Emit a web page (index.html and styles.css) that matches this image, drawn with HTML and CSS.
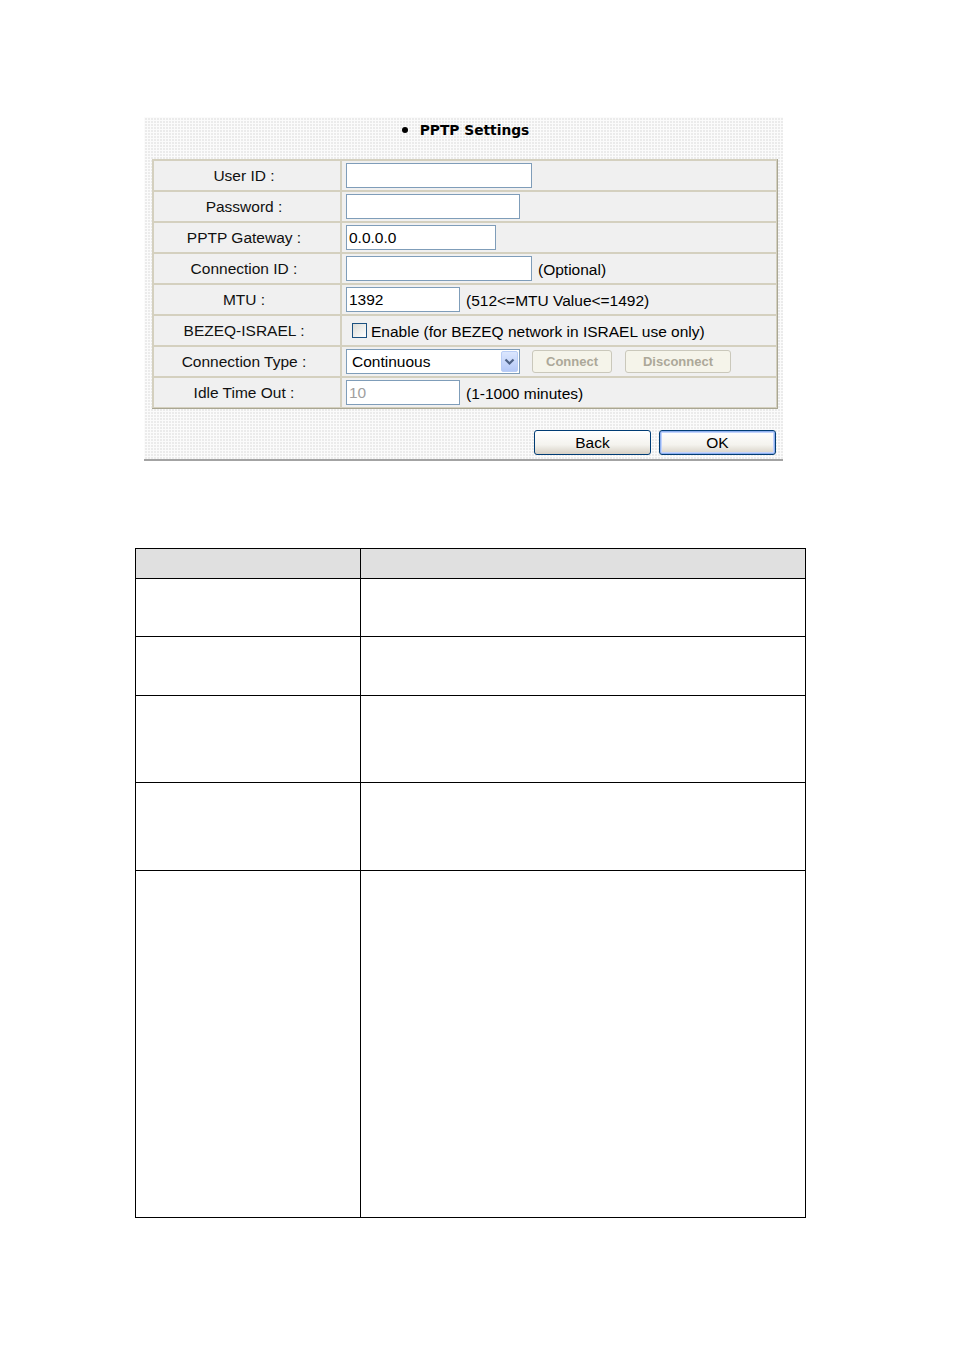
FILE: index.html
```html
<!DOCTYPE html>
<html>
<head>
<meta charset="utf-8">
<link rel="stylesheet" href="styles.css">
</head>
<body>
<div class="panel">
  <div class="title"><span class="bullet"></span>PPTP Settings</div>
  <div class="form">
    <div class="lab">User ID :</div>
    <div class="val"><input class="inp w186" type="text" value=""></div>
    <div class="lab">Password :</div>
    <div class="val"><input class="inp w174" type="password" value=""></div>
    <div class="lab">PPTP Gateway :</div>
    <div class="val"><input class="inp w150" type="text" value="0.0.0.0"></div>
    <div class="lab">Connection ID :</div>
    <div class="val"><input class="inp w186" type="text" value=""><span class="note">(Optional)</span></div>
    <div class="lab">MTU :</div>
    <div class="val"><input class="inp w114" type="text" value="1392"><span class="note">(512&lt;=MTU Value&lt;=1492)</span></div>
    <div class="lab">BEZEQ-ISRAEL :</div>
    <div class="val"><span class="chk"></span><span class="chktext">Enable (for BEZEQ network in ISRAEL use only)</span></div>
    <div class="lab">Connection Type :</div>
    <div class="val">
      <div class="select"><span class="seltext">Continuous</span><span class="arrow"><svg width="11" height="8" viewBox="0 0 11 8"><path d="M1.5 1.5 L5.5 5.5 L9.5 1.5" fill="none" stroke="#4d6185" stroke-width="2.2"/></svg></span></div>
      <span class="dbtn w80">Connect</span>
      <span class="dbtn w106">Disconnect</span>
    </div>
    <div class="lab">Idle Time Out :</div>
    <div class="val"><input class="inp w114 dis" type="text" value="10"><span class="note">(1-1000 minutes)</span></div>
  </div>
  <div class="actions">
    <span class="btn">Back</span>
    <span class="btn ok">OK</span>
  </div>
</div>

<table class="desc">
  <tr class="head"><td class="c1"></td><td></td></tr>
  <tr class="r58"><td class="c1"></td><td></td></tr>
  <tr class="r59"><td class="c1"></td><td></td></tr>
  <tr class="r87"><td class="c1"></td><td></td></tr>
  <tr class="r88"><td class="c1"></td><td></td></tr>
  <tr class="r347"><td class="c1"></td><td></td></tr>
</table>
</body>
</html>
```
FILE: styles.css
```css
html, body {
  margin: 0;
  padding: 0;
  background: #fff;
}
body {
  font-family: "Liberation Sans", Arial, sans-serif;
  color: #000;
}
.panel {
  margin: 117px 0 0 144px;
  width: 639px;
  height: 342px;
  background-color: #ebebeb;
  background-image:
    linear-gradient(90deg, #fbfbfb 1px, transparent 1px),
    linear-gradient(#fbfbfb 1px, transparent 1px);
  background-size: 3px 3px;
  border-bottom: 2px solid #a3a3a3;
  display: flex;
  flex-direction: column;
}
.title {
  height: 42px;
  box-sizing: border-box;
  padding-top: 2px;
  line-height: 22px;
  text-align: center;
  font-family: "DejaVu Sans", Verdana, sans-serif;
  font-weight: bold;
  font-size: 13.8px;
  padding-left: 4px;
}
.bullet {
  display: inline-block;
  width: 6px;
  height: 6px;
  border-radius: 50%;
  background: #000;
  margin-right: 12px;
  vertical-align: 2px;
}
.form {
  margin-left: 8px;
  width: 626px;
  box-sizing: border-box;
  display: grid;
  grid-template-columns: 186px 1fr;
  grid-auto-rows: 29px;
  gap: 2px;
  padding: 2px;
  background: #d4d0bf;
  box-shadow: inset -1px -1px 0 #a9a693;
}
.lab, .val {
  background: #f0f0f0;
  font-size: 15.5px;
  display: flex;
  align-items: center;
}
.lab {
  justify-content: center;
  color: #111;
  padding-right: 6px;
}
.val {
  padding-left: 4px;
}
.inp {
  box-sizing: border-box;
  height: 25px;
  border: 1px solid #7f9db9;
  background: #fff;
  font-family: "Liberation Sans", Arial, sans-serif;
  font-size: 15.5px;
  padding: 0 2px;
  margin: 0;
  outline: none;
  color: #000;
}
.inp.dis { color: #a0a0a0; }
.w186 { width: 186px; }
.w174 { width: 174px; }
.w150 { width: 150px; }
.w114 { width: 114px; }
.note {
  margin-left: 6px;
  padding-top: 3px;
}
.chk {
  box-sizing: border-box;
  width: 15px;
  height: 15px;
  margin-left: 6px;
  border: 1px solid #1c5180;
  background: linear-gradient(135deg, #dcdcd7, #fff);
}
.chktext {
  margin-left: 4px;
  padding-top: 2px;
}
.select {
  box-sizing: border-box;
  width: 174px;
  height: 25px;
  border: 1px solid #7f9db9;
  background: #fff;
  display: flex;
  align-items: center;
  justify-content: space-between;
  padding: 1px;
}
.seltext {
  padding-left: 4px;
}
.arrow {
  width: 17px;
  height: 21px;
  box-sizing: border-box;
  border: 1px solid #b9cdf6;
  border-radius: 2px;
  background: linear-gradient(#dbe6fe, #b5c9f7);
  display: flex;
  align-items: center;
  justify-content: center;
}
.dbtn {
  box-sizing: border-box;
  height: 23px;
  border: 1px solid #cac8bb;
  border-radius: 3px;
  background: #f5f4ea;
  color: #aca899;
  font-weight: bold;
  font-size: 13px;
  display: flex;
  align-items: center;
  justify-content: center;
}
.w80 { width: 80px; margin-left: 12px; }
.w106 { width: 106px; margin-left: 13px; }
.actions {
  margin-top: 21px;
  display: flex;
  justify-content: flex-end;
  gap: 8px;
  padding-right: 7px;
}
.btn {
  box-sizing: border-box;
  width: 117px;
  height: 25px;
  border: 1px solid #003c74;
  border-radius: 3px;
  background: linear-gradient(#ffffff, #f4f3ee 60%, #d6d0c5);
  font-size: 15.5px;
  display: flex;
  align-items: center;
  justify-content: center;
}
.btn.ok {
  box-shadow: inset 0 0 0 1px #8fb0ef, inset 0 0 0 2px #c2d3fc;
}
.desc {
  margin: 87px 0 0 135px;
  width: 671px;
  border-collapse: collapse;
}
.desc td {
  border: 1px solid #000;
  padding: 0;
}
.desc .c1 { width: 224px; }
.desc .head td { background: #e0e0e0; height: 29px; }
.r58 td { height: 57px; }
.r59 td { height: 58px; }
.r87 td { height: 86px; }
.r88 td { height: 87px; }
.r347 td { height: 346px; }
```
